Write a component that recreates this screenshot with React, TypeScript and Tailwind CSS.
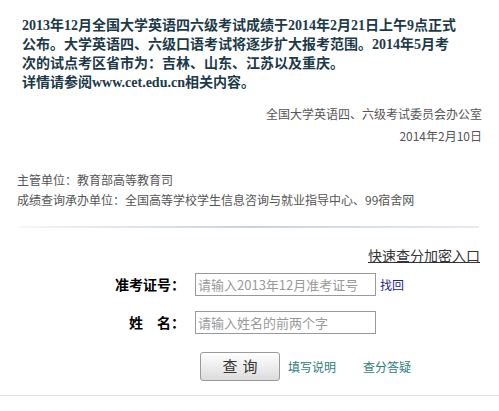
import React from 'react';

const sans = "font-['Noto_Sans_CJK_SC','Liberation_Sans',sans-serif]";

const App: React.FC = () => {
  return (
    <div className={`w-[499px] h-[411px] overflow-hidden bg-white ${sans}`}>
      {/* Announcement */}
      <div className="pt-[16px] pl-[22px] text-[14px] leading-[19px] font-bold text-[#1c3a48] whitespace-nowrap font-['Liberation_Serif','Noto_Sans_CJK_SC',serif]">
        2013年12月全国大学英语四六级考试成绩于2014年2月21日上午9点正式
        <br />
        公布。大学英语四、六级口语考试将逐步扩大报考范围。2014年5月考
        <br />
        次的试点考区省市为：吉林、山东、江苏以及重庆。
        <br />
        详情请参阅www.cet.edu.cn相关内容。
      </div>

      {/* Signature */}
      <div className="mt-[11px] pr-[17px] text-right text-[12px] leading-[22px] text-[#555]">
        <div>全国大学英语四、六级考试委员会办公室</div>
        <div>2014年2月10日</div>
      </div>

      {/* Units */}
      <div className="mt-[23px] pl-[17px] text-[12px] leading-[20px] text-[#555]">
        <div>主管单位：教育部高等教育司</div>
        <div>成绩查询承办单位：全国高等学校学生信息咨询与就业指导中心、99宿舍网</div>
      </div>

      {/* Divider */}
      <div className="mt-[16px] mx-[20px] h-[2px] bg-gradient-to-r from-[#f4f6f8] via-[#c9d3dc] to-[#e6ebf0]" />

      {/* Quick link */}
      <div className="mt-[18px] pr-[19px] text-right text-[14px] leading-[18px]">
        <a className="text-[#333] underline cursor-pointer">快速查分加密入口</a>
      </div>

      {/* Form */}
      <div className="mt-[9px] flex items-center h-[23px]">
        <label className="w-[185px] text-right text-[14px] font-bold text-black">准考证号：</label>
        <input
          className="ml-[10px] w-[181px] h-[23px] border border-[#999] px-[2px] text-[13px] outline-none placeholder:text-[#999]"
          placeholder="请输入2013年12月准考证号"
        />
        <a className="ml-[4px] text-[12px] text-[#1a2a8a] cursor-pointer">找回</a>
      </div>
      <div className="mt-[15px] flex items-center h-[23px]">
        <label className="w-[185px] text-right text-[14px] font-bold text-black">姓　名：</label>
        <input
          className="ml-[10px] w-[181px] h-[23px] border border-[#999] px-[2px] text-[13px] outline-none placeholder:text-[#999]"
          placeholder="请输入姓名的前两个字"
        />
      </div>

      {/* Actions */}
      <div className="mt-[18px] flex items-center h-[29px]">
        <button className="ml-[200px] w-[80px] h-[29px] rounded-[3px] border border-[#9a9a9a] bg-gradient-to-b from-white to-[#dcdcdc] text-[15px] tracking-[5px] pl-[5px] text-[#333] shadow-[inset_0_1px_0_#fff]">
          查询
        </button>
        <a className="ml-[8px] text-[12px] text-[#2b7d7a] cursor-pointer">填写说明</a>
        <a className="ml-[27px] text-[12px] text-[#2b7d7a] cursor-pointer">查分答疑</a>
      </div>

      {/* Bottom line */}
      <div className="mt-[14px] h-px bg-[#dedede]" />
    </div>
  );
};

export default App;
